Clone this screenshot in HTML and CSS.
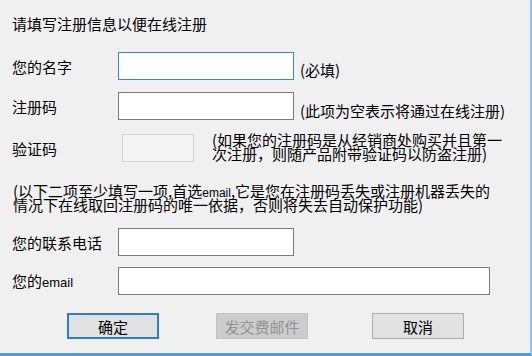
FILE: index.html
```html
<!DOCTYPE html>
<html lang="zh-CN">
<head>
<meta charset="utf-8">
<title>注册</title>
<link rel="stylesheet" href="styles.css">
</head>
<body>
<div class="window">
  <div class="dlg">
    <p class="title">请填写注册信息以便在线注册</p>

    <div class="row row-name">
      <label class="lbl">您的名字</label>
      <input class="field short focus" type="text">
      <span class="hint hint-req">(必填)</span>
    </div>

    <div class="row row-reg">
      <label class="lbl">注册码</label>
      <input class="field short" type="text">
      <span class="hint hint-low">(此项为空表示将通过在线注册)</span>
    </div>

    <div class="row row-verify">
      <label class="lbl">验证码</label>
      <div class="field verify"></div>
      <div class="note note-verify">
        <span class="line">(如果您的注册码是从经销商处购买并且第一</span>
        <span class="line">次注册，则随产品附带验证码以防盗注册)</span>
      </div>
    </div>

    <div class="note note-wide">
      <span class="line">(以下二项至少填写一项,首选<span class="lat">email</span>,它是您在注册码丢失或注册机器丢失的</span>
      <span class="line">情况下在线取回注册码的唯一依据，否则将失去自动保护功能)</span>
    </div>

    <div class="row row-phone">
      <label class="lbl">您的联系电话</label>
      <input class="field short" type="text">
    </div>

    <div class="row row-email">
      <label class="lbl">您的<span class="lat lat-lbl">email</span></label>
      <input class="field long" type="text">
    </div>

    <div class="buttons">
      <button class="btn btn-default" type="button">确定</button>
      <button class="btn btn-disabled" type="button" disabled>发交费邮件</button>
      <button class="btn btn-cancel" type="button">取消</button>
    </div>
  </div>
</div>
</body>
</html>
```

FILE: styles.css
```css
html, body {
  margin: 0;
  padding: 0;
}

body {
  background: #f0f0f0;
  font-family: "Noto Sans CJK SC", "Noto Sans", sans-serif;
  font-size: 15px;
  color: #000;
}

.window {
  width: 532px;
  height: 356px;
  box-sizing: border-box;
  background: #f0f0f0;
  border-right: 2px solid #8fc2ef;
  border-bottom: 3px solid #4b9be3;
  overflow: hidden;
}

.dlg {
  padding-left: 12px;
  display: flex;
  flex-direction: column;
  align-items: flex-start;
}

.title {
  margin: 16px 0 0 0;
  line-height: 15px;
  white-space: nowrap;
}

.row {
  display: flex;
  align-items: center;
  height: 28px;
}

.row-name { margin-top: 21px; }
.row-reg { margin-top: 12px; }
.row-verify { margin-top: 14px; }
.row-phone { margin-top: 16px; }
.row-email { margin-top: 11px; }

.lbl {
  flex: 0 0 106px;
  line-height: 15px;
  white-space: nowrap;
}

.field {
  box-sizing: border-box;
  height: 28px;
  margin: 0;
  padding: 0 3px;
  border: 1px solid #7a7a7a;
  background: #fff;
  font: inherit;
  outline: none;
}

.field.short { width: 176px; }
.field.long { width: 372px; }

.field.focus {
  border-color: #3586d8;
}

.field.verify {
  width: 72px;
  margin-left: 4px;
  background: #f4f4f4;
  border-color: #d2d2d2;
}

.hint {
  margin-left: 6px;
  line-height: 15px;
  white-space: nowrap;
}

.hint-req { margin-top: 6px; }
.hint-low { margin-top: 8px; }

.note {
  display: flex;
  flex-direction: column;
  white-space: nowrap;
}

.note .line {
  display: block;
  height: 14px;
  line-height: 14px;
}

.note-verify {
  align-self: flex-start;
  margin-left: 18px;
  margin-top: -1px;
}

.note-wide {
  margin-top: 22px;
  margin-left: 1px;
}

.lat {
  font-family: "Liberation Sans", "Noto Sans", sans-serif;
  font-size: 12px;
}

.lat-lbl {
  font-size: 13px;
}

.buttons {
  display: flex;
  margin-top: 18px;
  padding-left: 55px;
}

.btn {
  box-sizing: border-box;
  width: 92px;
  height: 26px;
  margin: 0;
  padding: 0;
  font: inherit;
  color: #000;
  background: #e1e1e1;
  border: 1px solid #adadad;
  line-height: 15px;
}

.btn-default {
  border: 2px solid #2b7fd2;
}

.btn-disabled {
  margin-left: 57px;
  background: #cccccc;
  border-color: #c2c2c2;
  color: #929292;
}

.btn-cancel {
  margin-left: 64px;
}
```
